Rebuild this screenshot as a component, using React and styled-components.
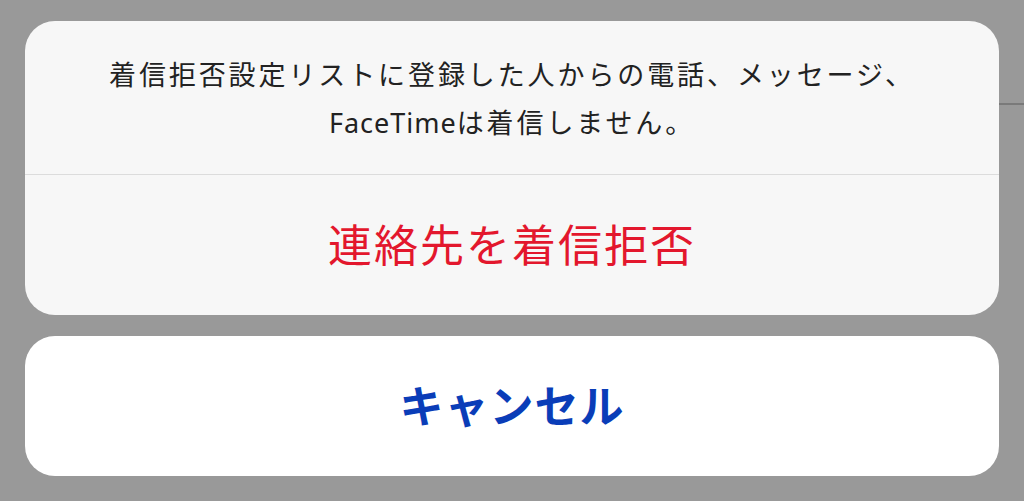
import styled, { createGlobalStyle } from "styled-components";

const Global = createGlobalStyle`
  html, body {
    margin: 0;
    padding: 0;
    background: #999999;
    font-family: "Noto Sans", "Noto Sans CJK JP", sans-serif;
  }
`

const Screen = styled.div`
  position: relative;
  width: 1024px;
  height: 501px;
  overflow: hidden;
  background: #999999;
`

// page content dimmed behind the sheet
const Backdrop = styled.div`
  padding-top: 103px;
`

const RowLine = styled.div`
  height: 2px;
  margin-left: 620px;
  background: #7a7a7a;
`

const Overlay = styled.div`
  position: absolute;
  inset: 0;
  padding: 21px 25px;
  display: flex;
  flex-direction: column;
  gap: 21px;
`

const Group = styled.div`
  background: ${(p) => (p.$white ? "#ffffff" : "#f7f7f7")};
  border-radius: 30px;
  overflow: hidden;
`

const Message = styled.div`
  padding: 30px 20px 27px;
  text-align: center;
  color: #222;
  font-size: 27px;
  line-height: 48px;
  letter-spacing: 2.9px;
  border-bottom: 1px solid #dcdcdc;
`

const Latin = styled.span`
  letter-spacing: 1px;
`

const Action = styled.div`
  height: ${(p) => p.$h}px;
  padding-bottom: 4px;
  box-sizing: border-box;
  display: flex;
  align-items: center;
  justify-content: center;
  font-size: 44px;
  letter-spacing: ${(p) => (p.$bold ? 1 : 2)}px;
  font-weight: ${(p) => (p.$bold ? 700 : 400)};
  color: ${(p) => p.$color};
`

export default function App() {
  return (
    <Screen>
      <Global />
      <Backdrop>
        <RowLine />
      </Backdrop>
      <Overlay>
        <Group>
          <Message>
            着信拒否設定リストに登録した人からの電話、メッセージ、
            <br />
            <Latin>FaceTime</Latin>は着信しません。
          </Message>
          <Action $h={140} $color="#e3172d">連絡先を着信拒否</Action>
        </Group>
        <Group $white>
          <Action $h={140} $bold $color="#0a3db8">キャンセル</Action>
        </Group>
      </Overlay>
    </Screen>
  );
}
